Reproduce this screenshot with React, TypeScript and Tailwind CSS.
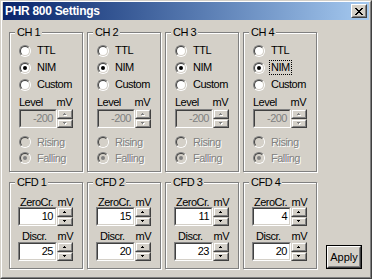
import React from "react";

const raisedOuter =
  "border border-t-[#d4d0c8] border-l-[#d4d0c8] border-r-[#404040] border-b-[#404040]";
const raisedInner =
  "border border-t-white border-l-white border-r-[#808080] border-b-[#808080]";
const disabledText = "text-[#808080] [text-shadow:1px_1px_0_#fff]";

function Arrow({ up, disabled }: { up: boolean; disabled?: boolean }) {
  const rects = up
    ? [
        [1, 0, 1, 1],
        [0, 1, 3, 1],
      ]
    : [
        [0, 0, 3, 1],
        [1, 1, 1, 1],
      ];
  return (
    <svg width="4" height="3" shapeRendering="crispEdges" className="block">
      {disabled &&
        rects.map((r, i) => (
          <rect key={"s" + i} x={r[0] + 1} y={r[1] + 1} width={r[2]} height={r[3]} fill="#fff" />
        ))}
      {rects.map((r, i) => (
        <rect key={i} x={r[0]} y={r[1]} width={r[2]} height={r[3]} fill={disabled ? "#808080" : "#000"} />
      ))}
    </svg>
  );
}

function SpinButton({ up, disabled }: { up: boolean; disabled?: boolean }) {
  return (
    <div className={`${up ? "h-[10px]" : "h-[9px]"} w-[16px] bg-[#d4d0c8] ${raisedOuter}`}>
      <div className={`w-full h-full flex items-center justify-center ${raisedInner}`}>
        <Arrow up={up} disabled={disabled} />
      </div>
    </div>
  );
}

function SpinField({ value, disabled, wide }: { value: string; disabled?: boolean; wide?: boolean }) {
  return (
    <div className="flex">
      <div
        className={`h-[19px] ${wide ? "w-[39px]" : "w-[38px]"} border border-t-[#808080] border-l-[#808080] border-r-white border-b-white`}
      >
        <div
          className={`h-full border border-t-[#404040] border-l-[#404040] border-r-[#d4d0c8] border-b-[#d4d0c8] flex items-center justify-end pr-[2px] leading-[15px] ${
            disabled ? "bg-[#d4d0c8] text-[#808080]" : "bg-white text-black"
          }`}
        >
          {value}
        </div>
      </div>
      <div className="flex flex-col">
        <SpinButton up disabled={disabled} />
        <SpinButton up={false} disabled={disabled} />
      </div>
    </div>
  );
}

function Radio({ checked, disabled }: { checked?: boolean; disabled?: boolean }) {
  return (
    <span className="w-[12px] h-[12px] rounded-full border border-t-[#808080] border-l-[#808080] border-r-white border-b-white flex shrink-0">
      <span
        className={`w-full h-full rounded-full border border-t-[#404040] border-l-[#404040] border-r-[#d4d0c8] border-b-[#d4d0c8] flex items-center justify-center ${
          disabled ? "bg-[#d4d0c8]" : "bg-white"
        }`}
      >
        {checked && (
          <span className={`w-[4px] h-[4px] rounded-full ${disabled ? "bg-[#808080]" : "bg-black"}`} />
        )}
      </span>
    </span>
  );
}

function RadioRow({
  label,
  checked,
  disabled,
  focus,
  tall,
}: {
  label: string;
  checked?: boolean;
  disabled?: boolean;
  focus?: boolean;
  tall?: boolean;
}) {
  return (
    <div className={`${tall ? "h-[17px]" : "h-[16px]"} flex items-center gap-[6px]`}>
      <Radio checked={checked} disabled={disabled} />
      {focus ? (
        <span className="inline-block border border-dotted border-black px-[1px] -ml-[2px] leading-[13px]">
          {label}
        </span>
      ) : (
        <span className={disabled ? disabledText : ""}>{label}</span>
      )}
    </div>
  );
}

const groupBox =
  "border border-[#808080] shadow-[inset_1px_1px_0_#fff,1px_1px_0_#fff] min-w-0";
const legendCls = "ml-[5px] px-[2px] bg-[#d4d0c8] leading-[13px]";

function ChGroup({ n, focus }: { n: number; focus?: boolean }) {
  return (
    <fieldset className={`h-[146px] ${groupBox}`}>
      <legend className={legendCls}>CH {n}</legend>
      <div className="flex flex-col pl-[9px] pt-[3px]">
        <RadioRow label="TTL" tall />
        <RadioRow label="NIM" checked focus={focus} tall />
        <RadioRow label="Custom" tall />
        <div className="mt-[3px] h-[13px] w-[53px] flex justify-between">
          <span>Level</span>
          <span>mV</span>
        </div>
        <SpinField value="-200" disabled />
        <div className="mt-[6px] flex flex-col">
          <RadioRow label="Rising" disabled />
          <RadioRow label="Falling" checked disabled />
        </div>
      </div>
    </fieldset>
  );
}

function CfdGroup({ n, zero, discr }: { n: number; zero: string; discr: string }) {
  return (
    <fieldset className={`h-[93px] ${groupBox}`}>
      <legend className={legendCls}>CFD {n}</legend>
      <div className="flex flex-col pl-[8px] pt-[8px]">
        <div className="h-[10px] leading-[10px] w-[55px] flex justify-between">
          <span className="pl-[2px]">ZeroCr.</span>
          <span>mV</span>
        </div>
        <SpinField value={zero} wide />
        <div className="mt-[5px] h-[10px] leading-[10px] w-[55px] flex justify-between">
          <span className="pl-[4px]">Discr.</span>
          <span>mV</span>
        </div>
        <div className="mt-[1px]">
          <SpinField value={discr} wide />
        </div>
      </div>
    </fieldset>
  );
}

function CloseGlyph() {
  const rows = [
    "XX....XX",
    ".XX..XX.",
    "..XXXX..",
    "...XX...",
    "..XXXX..",
    ".XX..XX.",
    "XX....XX",
  ];
  const rects: React.ReactNode[] = [];
  rows.forEach((r, y) =>
    r.split("").forEach((c, x) => {
      if (c === "X") rects.push(<rect key={`${x}-${y}`} x={x} y={y} width={1} height={1} fill="#000" />);
    })
  );
  return (
    <svg width="8" height="7" shapeRendering="crispEdges" className="block">
      {rects}
    </svg>
  );
}

export default function App() {
  return (
    <div className="w-[372px] h-[279px] bg-[#d4d0c8] border border-t-[#d4d0c8] border-l-[#d4d0c8] border-r-[#404040] border-b-[#404040] font-['Liberation_Sans',Arial,sans-serif] text-[11px] leading-[13px] tracking-[-0.5px] text-black select-none">
      <div className="h-full border border-t-white border-l-white border-r-[#808080] border-b-[#808080] px-[1px] pb-[1px] flex flex-col">
        <div className="h-[18px] shrink-0 flex items-center justify-between bg-linear-to-r from-[#0a246a] to-[#a6caf0] pl-[2px] pr-[2px]">
          <span className="text-white font-bold text-[12px] tracking-[-0.3px] leading-[18px]">
            PHR 800 Settings
          </span>
          <div className={`w-[16px] h-[14px] bg-[#d4d0c8] border border-t-white border-l-white border-r-[#404040] border-b-[#404040]`}>
            <div className="w-full h-full border border-t-[#d4d0c8] border-l-[#d4d0c8] border-r-[#808080] border-b-[#808080] flex items-center justify-center">
              <CloseGlyph />
            </div>
          </div>
        </div>
        <div className="flex pl-[6px] pt-[6px]">
          <div className="grid grid-cols-[74px_74px_74px_74px] gap-[4px]">
            <ChGroup n={1} />
            <ChGroup n={2} />
            <ChGroup n={3} />
            <ChGroup n={4} focus />
            <CfdGroup n={1} zero="10" discr="25" />
            <CfdGroup n={2} zero="15" discr="20" />
            <CfdGroup n={3} zero="11" discr="23" />
            <CfdGroup n={4} zero="4" discr="20" />
          </div>
          <div className="ml-[9px] flex items-end">
            <div className="w-[36px] h-[24px] border border-black bg-[#d4d0c8]">
              <div className="w-full h-full border border-t-white border-l-white border-r-[#404040] border-b-[#404040]">
                <div className="w-full h-full border border-t-[#d4d0c8] border-l-[#d4d0c8] border-r-[#808080] border-b-[#808080] flex items-center justify-center tracking-normal">
                  Apply
                </div>
              </div>
            </div>
          </div>
        </div>
      </div>
    </div>
  );
}
